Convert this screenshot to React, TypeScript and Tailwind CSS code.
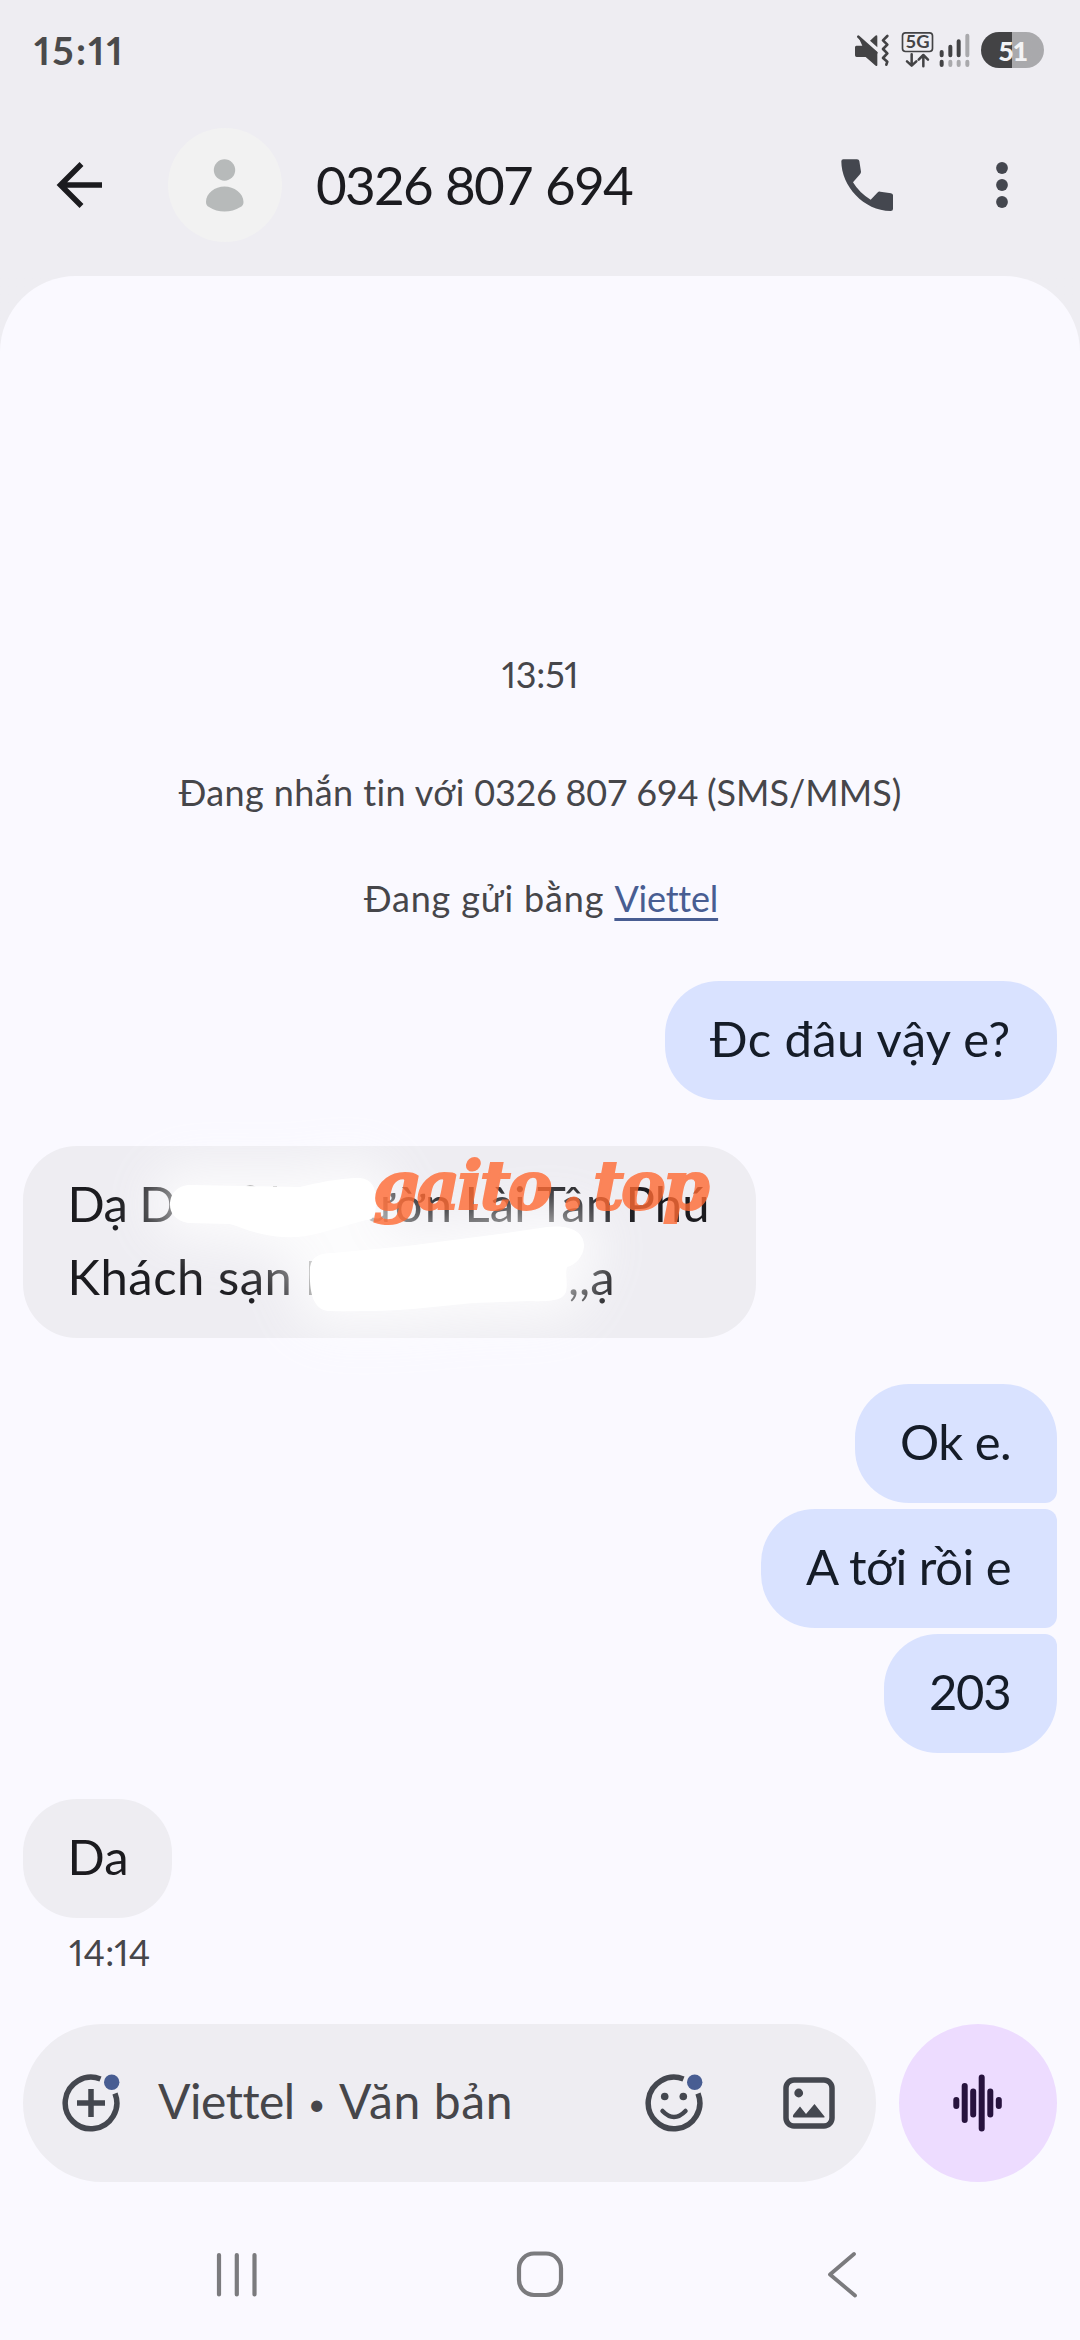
import type { ReactNode } from "react";

function StatusBar() {
  return (
    <div className="flex h-[100px] items-center justify-between pl-[34px] pr-[36px]">
      <span className="text-[39px] font-bold leading-none tracking-[2.2px] proportional-nums text-[#4a4a4b]">15:11</span>
      <div className="flex items-center">
        <svg className="h-[40px] w-[40px]" viewBox="220 90 120 120" fill="#434345">
          <path d="M230 137H248L237 113L293 157V195Q293 200 288 197L258 171H231Q226 171 226 166V142Q226 137 230 137Z" />
          <path d="M236 110L290 158" stroke="#434345" strokeWidth="8" strokeLinecap="round" />
          <path d="M271 122L287 107Q293 103 293 110V142Z" />
          <path d="M323 109L310 122L323 135L310 148L323 161L310 175L323 186L320 195" transform="translate(0 -1)" fill="none" stroke="#434345" strokeWidth="8" strokeLinecap="round" strokeLinejoin="round" />
        </svg>
        <svg className="ml-[7px] h-[40px] w-[35px]" viewBox="360 90 105 120" fill="none" stroke="#434345">
          <rect x="367.500" y="98.500" width="90" height="56" rx="9" strokeWidth="5" />
          <text x="412.500" y="144" textAnchor="middle" fontSize="50" fontWeight="700" fontFamily="Lato" fill="#434345" stroke="none" textLength="72" lengthAdjust="spacingAndGlyphs">5G</text>
          <path d="M395 163V196M381 184L395 197L409 184M430 199V166M416 179L430 165L444 179" strokeWidth="7.500" strokeLinecap="round" strokeLinejoin="round" />
        </svg>
        <svg className="ml-[3px] h-[40px] w-[34px]" viewBox="475 90 102 120" strokeWidth="12" strokeLinecap="round">
          <path d="M486 156V166M512 140V166M537 124V166M486 185V195" stroke="#434345" />
          <path d="M563 107V166M512 185V195M537 185V195M563 185V195" stroke="#a9a9ac" />
        </svg>
        <div className="ml-[9px] flex h-[36px] w-[63px] items-center justify-center rounded-full bg-linear-to-r from-[#434345] from-50% to-[#a9a9ac] to-50%">
          <span className="text-[27px] font-black leading-none tracking-[-1.5px] text-[#f3f3f5]">51</span>
        </div>
      </div>
    </div>
  );
}

function Toolbar() {
  return (
    <div className="flex h-[170px] items-center pl-[56px]">
      <svg className="h-[48px] w-[48px]" viewBox="0 0 48 48" fill="none" stroke="#1b1b1f" strokeWidth="5.500">
        <path d="M46 24H5M25.500 3L4.500 24L25.500 45" />
      </svg>
      <div className="ml-[64px] flex h-[114px] w-[114px] items-center justify-center rounded-full bg-[#f2f2f2]">
        <svg className="h-[56px] w-[40px]" viewBox="0 0 40 56" fill="#b7baba">
          <circle cx="19.500" cy="13" r="10.700" />
          <path d="M1 45C1 36 10 29.500 19.500 29.500S38.500 36 38.500 45Q38.500 48.500 35.500 50Q28 54.500 19.500 54.500T4 50Q1 48.500 1 45Z" />
        </svg>
      </div>
      <h1 className="ml-[34px] text-[53px] leading-[64px] tracking-[-1.7px] [word-spacing:1px] text-[#1b1b1f]">0326 807 694</h1>
      <svg className="ml-auto h-[60px] w-[60px]" viewBox="170 467 180 180" fill="#44474f">
        <path d="M189 480H230Q236 480 237 485L242 517Q242 521 239 525L218 549Q238 582 271 601L291 580Q295 576 300 577L332 582Q338 583 338 588V629Q338 635 331 635C250 635 183 560 183 486Q183 480 189 480Z" />
      </svg>
      <svg className="ml-[85px] mr-[58px] h-[60px] w-[40px]" viewBox="0 0 40 60" fill="#44474f">
        <circle cx="20" cy="13" r="5.900" />
        <circle cx="20" cy="30" r="5.900" />
        <circle cx="20" cy="47" r="5.900" />
      </svg>
    </div>
  );
}

function Sent({ children, shape }: { children: ReactNode; shape: string }) {
  return (
    <div className={`h-[119px] self-end whitespace-nowrap bg-[#d9e2ff] pl-[45px] text-[49px] leading-[114px] text-[#151c28] ${shape}`}>
      {children}
    </div>
  );
}

const scribbles = (
  <>
    <path d="M170 1205C170 1190 182 1184 192 1185L300 1187C330 1180 345 1178 360 1178C372 1179 376 1188 376 1200C376 1214 374 1221 366 1220C350 1224 335 1229 320 1233C300 1238 285 1239 262 1234C248 1231 240 1227 230 1224L188 1223C174 1220 170 1212 170 1205Z" />
    <path d="M310 1267C312 1256 320 1253 333 1253L407 1246L507 1233L547 1227C573 1224 585 1234 584 1247C583 1256 576 1265 567 1267C565 1273 568 1284 566 1292C563 1300 552 1302 530 1301L473 1303L413 1309Q375 1312 328 1311C312 1309 309 1290 310 1267Z" />
  </>
);

function ReceivedAddress() {
  return (
    <div className="relative mt-[46px] h-[192px] w-[733px] self-start rounded-[54px] bg-[#eeedf2] pl-[44.5px] pt-[21px] text-[49px] leading-[73px] text-[#1b1b1f]">
      <div className="flex w-[642px] justify-between whitespace-nowrap">
        <span className="tracking-[-0.6px]">Dạ Do</span>
        <span>ườn Lài Tân Phú</span>
      </div>
      <div className="flex w-[547px] justify-between whitespace-nowrap">
        <span className="tracking-[0.5px]">Khách sạn</span>
        <span>,,ạ</span>
      </div>
      <svg className="absolute left-[-23px] top-[-86px] h-[340px] w-[800px]" viewBox="0 1060 800 340">
        <defs>
          <filter id="glow" x="-40%" y="-80%" width="180%" height="260%">
            <feGaussianBlur stdDeviation="25" />
          </filter>
        </defs>
        <path d="M244 1190Q250 1184 256 1190M275 1186V1190M311 1261V1295" fill="none" stroke="#555" strokeWidth="4" />
        <g fill="#fff" stroke="#fff" strokeWidth="34" strokeLinejoin="round" opacity="0.82" filter="url(#glow)">{scribbles}</g>
        <g fill="#fff">{scribbles}</g>
      </svg>
      <div className="absolute left-[350px] top-[-8px] flex items-baseline whitespace-nowrap font-['DejaVu_Serif'] text-[67px] font-bold italic leading-[96px] tracking-[-3px] text-[#ff6a33] opacity-80 [-webkit-text-stroke:2px_#ff6a33]">
        <span className="w-[188px]">gaito</span>
        <span className="w-[32px]">.</span>
        <span>top</span>
      </div>
    </div>
  );
}

function Conversation() {
  return (
    <main className="flex h-[1748px] flex-col rounded-t-[76px] bg-[#faf9ff] px-[23px]">
      <div className="flex flex-col items-center whitespace-pre pt-[378px] text-[36px] leading-[40px] text-[#46464a]">
        <p className="tracking-[-0.2px] proportional-nums">13:51</p>
        <p className="mt-[78px] [font-variant-ligatures:none]">
          <span className="tracking-[0.4px]">Đang nhắn tin với </span>
          <span className="tracking-[-0.3px]">0326 807 694 </span>
          <span className="tracking-[0px]">(SMS/MMS)</span>
        </p>
        <p className="mt-[66px] pl-[2px] tracking-[0.85px]">
          Đang gửi bằng{" "}
          <span className="tracking-[-0.2px] text-[#485d92] underline decoration-[3px] underline-offset-[6px]">Viettel</span>
        </p>
      </div>
      <div className="mt-[63px] flex flex-col">
        <Sent shape="w-[392px] rounded-[54px] tracking-[0.4px]">Đc đâu vậy e?</Sent>
        <ReceivedAddress />
        <div className="mt-[46px] flex flex-col gap-[6px]">
          <Sent shape="w-[202px] rounded-[54px] rounded-br-[12px] tracking-[-0.5px]">Ok e.</Sent>
          <Sent shape="w-[296px] rounded-[54px] rounded-r-[12px] tracking-[-0.5px]">A tới rồi e</Sent>
          <Sent shape="w-[173px] rounded-[54px] rounded-tr-[12px] tracking-[-1.3px]">203</Sent>
        </div>
        <div className="mt-[46px] h-[119px] w-[149px] self-start rounded-[54px] bg-[#eeedf2] pl-[44.5px] text-[49px] leading-[114px] text-[#1b1b1f]">Da</div>
        <time className="mt-[14px] pl-[46px] text-[36px] leading-[40px] tracking-[0.2px] proportional-nums text-[#46464a]">14:14</time>
      </div>
    </main>
  );
}

function Composer() {
  return (
    <div className="flex h-[158px] gap-[23px] px-[23px]">
      <div className="flex w-[853px] items-center rounded-full bg-[#eeedf2] pl-[38px] text-[#44474f]">
        <svg className="h-[60px] w-[60px]" viewBox="-30 -30 60 60" fill="none" stroke="#44474f" strokeWidth="5.500">
          <path d="M9.500 -24A25.800 25.800 0 1 0 24 -9.500M0 -14V14M-14 0H14" />
          <circle cx="20.700" cy="-20.700" r="7.700" fill="#485d92" stroke="none" />
        </svg>
        <span className="mb-[4px] ml-[37px] flex items-center whitespace-nowrap text-[48px] leading-[60px] text-[#46464a]">
          <span className="w-[150px] tracking-[-0.5px]">Viettel</span>
          <span className="w-[31px] pt-[3px] text-[30px] leading-none">•</span>
          <span className="tracking-[0.6px]">Văn bản</span>
        </span>
        <svg className="ml-auto h-[60px] w-[60px]" viewBox="-30 -30 60 60" fill="none" stroke="#44474f" strokeWidth="5.500">
          <path d="M9.500 -24A25.800 25.800 0 1 0 24 -9.500" />
          <path d="M-11.500 8Q0 20 11.500 8" strokeWidth="4.500" strokeLinecap="round" />
          <circle cx="-9.300" cy="-6.500" r="3.800" fill="#44474f" stroke="none" />
          <circle cx="9.300" cy="-6.500" r="3.800" fill="#44474f" stroke="none" />
          <circle cx="20.700" cy="-20.700" r="7.700" fill="#485d92" stroke="none" />
        </svg>
        <svg className="ml-[75px] mr-[37px] h-[60px] w-[60px]" viewBox="-30 -30 60 60" fill="#44474f">
          <rect x="-23" y="-23" width="46" height="46" rx="8" fill="none" stroke="#44474f" strokeWidth="5.500" />
          <circle cx="-10.300" cy="-10" r="4.400" />
          <path d="M-15.500 11.500L-9 3.500L-3 11L5.500 1L15.500 13.500Q16 14.500 15 14.500H-15Q-17 14 -15.500 11.500Z" />
        </svg>
      </div>
      <div className="flex w-[158px] items-center justify-center rounded-full bg-[#eddcff]">
        <svg className="h-[60px] w-[60px]" viewBox="-32.500 -30 60 60" stroke="#27133e" strokeWidth="6" strokeLinecap="round">
          <path d="M-24.200 -3V3M-15.800 -17V17M-7.300 -11.500V11.500M1.200 -25.500V25.500M9.800 -11.500V11.500M18.300 -3V3" />
        </svg>
      </div>
    </div>
  );
}

function NavigationBar() {
  return (
    <nav className="flex h-[158px] items-center justify-between pl-[207px] pr-[208px] pt-[26px]">
      <svg className="h-[60px] w-[60px]" viewBox="0 0 60 60" stroke="#7b7b7e" strokeWidth="4.200" strokeLinecap="round">
        <path d="M12 11V50.500M29.800 11V50.500M47.500 11V50.500" />
      </svg>
      <svg className="h-[60px] w-[60px]" viewBox="0 0 60 60" fill="none" stroke="#7b7b7e" strokeWidth="4.200">
        <rect x="9" y="9.500" width="42" height="41.500" rx="15" />
      </svg>
      <svg className="h-[60px] w-[60px]" viewBox="0 0 60 60" fill="none" stroke="#7b7b7e" strokeWidth="3.800" strokeLinecap="round" strokeLinejoin="round">
        <path d="M42 10L18 30.500L43 51.500" />
      </svg>
    </nav>
  );
}

export default function App() {
  return (
    <div className="flex h-[2340px] w-[1080px] flex-col overflow-hidden bg-[#faf9ff] font-['Lato','Noto_Sans',sans-serif]">
      <header className="h-[276px] bg-[#eeedf2]">
        <StatusBar />
        <Toolbar />
      </header>
      <div className="bg-linear-to-b from-[#eeedf2] from-[100px] to-[#faf9ff] to-[100px]">
        <Conversation />
      </div>
      <Composer />
      <NavigationBar />
    </div>
  );
}
